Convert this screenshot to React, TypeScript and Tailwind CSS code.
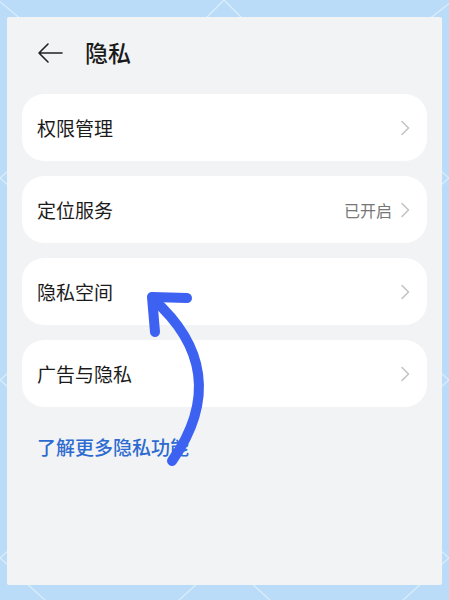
import React from 'react';

const font = { fontFamily: '"Noto Sans CJK SC", "Noto Sans", sans-serif' };

const rows = [
  { label: '权限管理', value: '' },
  { label: '定位服务', value: '已开启' },
  { label: '隐私空间', value: '' },
  { label: '广告与隐私', value: '' },
];

const Chevron: React.FC = () => (
  <svg width="10" height="16" viewBox="0 0 10 16" fill="none">
    <path d="M2 1.5 L8.5 8 L2 14.5" stroke="#c4c4c4" strokeWidth="1.6" strokeLinecap="round" strokeLinejoin="round" />
  </svg>
);

const App: React.FC = () => {
  return (
    <div className="relative w-[449px] h-[600px] overflow-hidden bg-[#badcf8]" style={font}>
      {/* lattice lines in the blue frame */}
      <svg className="absolute inset-0 pointer-events-none" width="449" height="600">
        <g stroke="#dcedfb" strokeWidth="1.2">
          <line x1="-2" y1="0" x2="22" y2="20" />
          <line x1="224" y1="0" x2="204" y2="20" />
          <line x1="224" y1="0" x2="244" y2="20" />
          <line x1="451" y1="2" x2="428" y2="20" />
          <line x1="0" y1="178" x2="9" y2="170" />
          <line x1="0" y1="178" x2="9" y2="186" />
          <line x1="0" y1="380" x2="9" y2="372" />
          <line x1="0" y1="380" x2="9" y2="388" />
          <line x1="0" y1="558" x2="9" y2="550" />
          <line x1="0" y1="558" x2="9" y2="566" />
          <line x1="449" y1="178" x2="440" y2="170" />
          <line x1="449" y1="178" x2="440" y2="186" />
          <line x1="449" y1="380" x2="440" y2="372" />
          <line x1="449" y1="380" x2="440" y2="388" />
          <line x1="449" y1="558" x2="440" y2="550" />
          <line x1="449" y1="558" x2="440" y2="566" />
          <line x1="25" y1="582" x2="46" y2="601" />
          <line x1="199" y1="582" x2="178" y2="601" />
          <line x1="250" y1="582" x2="271" y2="601" />
          <line x1="423" y1="582" x2="402" y2="601" />
        </g>
      </svg>

      <div className="relative mt-[17px] mx-[7px] h-[568px] bg-[#f2f3f5] rounded-[2px] px-[15px]">
        <div className="flex items-center h-[70px] pt-[1px]">
          <svg width="26" height="22" viewBox="0 0 26 22" fill="none" className="ml-[15px]">
            <path d="M25 11 H2 M11 2 L2 11 L11 20" stroke="#222" strokeWidth="1.6" strokeLinecap="round" strokeLinejoin="round" />
          </svg>
          <span className="ml-[22px] text-[23px] text-[#1a1a1a] font-medium leading-none">隐私</span>
        </div>

        <div className="flex flex-col gap-[15px] mt-[7px]">
          {rows.map((row) => (
            <div key={row.label} className="flex items-center h-[67px] bg-white rounded-[22px] pl-[15px] pr-[17px]">
              <span className="flex-1 text-[19px] text-[#1b1b1b] leading-none">{row.label}</span>
              {row.value && <span className="text-[16px] text-[#777] mr-[8px] leading-none">{row.value}</span>}
              <Chevron />
            </div>
          ))}
        </div>

        <div className="mt-[30px] pl-[15px] text-[19px] font-medium text-[#2e6bd0] leading-none">了解更多隐私功能</div>
      </div>

      {/* hand-drawn arrow annotation */}
      <svg className="absolute inset-0 pointer-events-none" width="449" height="600">
        <g stroke="#3d62f2" strokeWidth="10" strokeLinecap="round" strokeLinejoin="round" fill="none">
          <path d="M172 461 C215 400, 205 345, 153 299" />
          <path d="M187 298 L152 297 L155 332" />
        </g>
      </svg>
    </div>
  );
};

export default App;
